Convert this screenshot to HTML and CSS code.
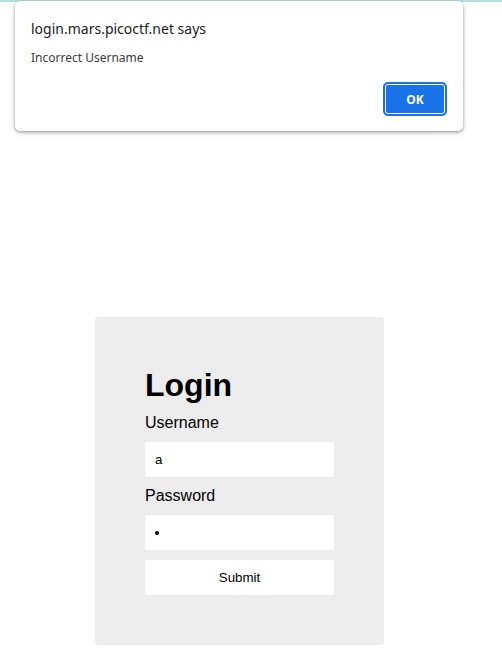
FILE: index.html
```html
<!DOCTYPE html>
<html>
<head>
<meta charset="utf-8">
<link rel="stylesheet" href="styles.css">
</head>
<body>
<div class="topline"></div>
<main class="page">
  <form class="card">
    <h1 class="title">Login</h1>
    <label class="label">Username</label>
    <div class="field">a</div>
    <label class="label label-pw">Password</label>
    <div class="field field-pw"><span class="dot"></span></div>
    <div class="submit">Submit</div>
  </form>
</main>
<div class="dialog">
  <div class="dialog-title">login.mars.picoctf.net says</div>
  <div class="dialog-msg">Incorrect Username</div>
  <div class="dialog-actions">
    <div class="ok">OK</div>
  </div>
</div>
</body>
</html>
```

FILE: styles.css
```css
html, body {
  margin: 0;
  padding: 0;
  background: #ffffff;
}
body {
  width: 502px;
  height: 650px;
  overflow: hidden;
  position: relative;
  font-family: "Liberation Sans", Arial, sans-serif;
}
.topline {
  height: 2px;
  background: #b4dde1;
}
.page {
  padding-top: 315px;
  padding-left: 95px;
}
.card {
  width: 189px;
  height: 278px;
  padding: 50px 50px 0 50px;
  background: #ededed;
  border-radius: 3px;
  display: flex;
  flex-direction: column;
}
.title {
  margin: 0 0 10px 0;
  font-size: 32px;
  font-weight: bold;
  line-height: 37px;
  color: #000;
}
.label {
  font-size: 16px;
  line-height: 18px;
  color: #000;
  margin: 0 0 10px 0;
}
.label-pw {
  margin-top: 10px;
}
.field {
  height: 35px;
  flex: none;
  background: #fff;
  border-radius: 3px;
  padding: 0 10px;
  display: flex;
  align-items: center;
  font-size: 13.33px;
  color: #000;
  box-sizing: border-box;
}
.dot {
  width: 4px;
  height: 4px;
  border-radius: 50%;
  background: #000;
}
.submit {
  margin-top: 10px;
  height: 35px;
  flex: none;
  background: #fff;
  border-radius: 3px;
  display: flex;
  align-items: center;
  justify-content: center;
  font-size: 13.33px;
  color: #000;
}
.dialog {
  position: absolute;
  left: 15px;
  top: 1px;
  width: 448px;
  height: 130px;
  box-sizing: border-box;
  background: #fff;
  border-radius: 5px;
  box-shadow: 0 1px 3px rgba(0,0,0,0.35), 0 2px 6px rgba(0,0,0,0.15);
  padding: 18px 16px 0 16px;
  font-family: "Noto Sans", "Open Sans", sans-serif;
}
.dialog-title {
  font-size: 14px;
  line-height: 20px;
  color: #202124;
}
.dialog-msg {
  margin-top: 11px;
  font-size: 12px;
  line-height: 16px;
  color: #3c3c3c;
}
.dialog-actions {
  display: flex;
  justify-content: flex-end;
  margin-top: 16px;
}
.ok {
  width: 64px;
  height: 34px;
  box-sizing: border-box;
  background: #1a73e8;
  border: 2px solid #1a73e8;
  box-shadow: inset 0 0 0 1px #ffffff;
  border-radius: 5px;
  display: flex;
  align-items: center;
  justify-content: center;
  color: #fff;
  font-weight: bold;
  font-size: 12px;
}
```
